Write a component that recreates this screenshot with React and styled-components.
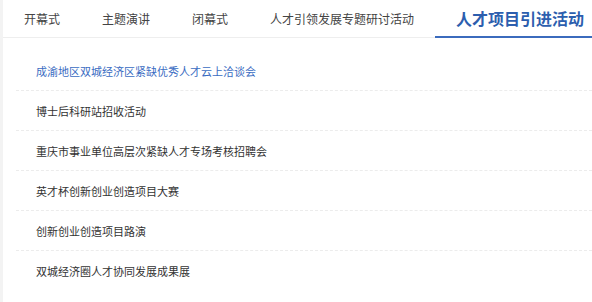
import React from 'react';
import styled, { createGlobalStyle } from 'styled-components';

const GlobalStyle = createGlobalStyle`
  html, body {
    margin: 0;
    padding: 0;
    background: #fff;
  }
  body {
    font-family: "Noto Sans CJK SC", "Noto Sans", sans-serif;
  }
`;

const tabs = ['开幕式', '主题演讲', '闭幕式', '人才引领发展专题研讨活动', '人才项目引进活动'];

const items = [
  '成渝地区双城经济区紧缺优秀人才云上洽谈会',
  '博士后科研站招收活动',
  '重庆市事业单位高层次紧缺人才专场考核招聘会',
  '英才杯创新创业创造项目大赛',
  '创新创业创造项目路演',
  '双城经济圈人才协同发展成果展',
];

const Panel = styled.div`
  width: 592px;
  height: 302px;
  box-sizing: border-box;
  border-left: 3px solid #f3f3f3;
  overflow: hidden;
`;

const TabBar = styled.div`
  display: flex;
  height: 37px;
  border-bottom: 1px solid #eeeeee;
  white-space: nowrap;
`;

const Tab = styled.div`
  flex-shrink: 0;
  display: flex;
  align-items: center;
  padding: 0 21px;
  height: ${p => (p.$active ? '36px' : '37px')};
  font-size: ${p => (p.$active ? '16px' : '12px')};
  font-weight: ${p => (p.$active ? 700 : 400)};
  color: ${p => (p.$active ? '#2c5eae' : '#444')};
  border-bottom: ${p => (p.$active ? '2px solid #3b6bbd' : 'none')};
  margin-bottom: ${p => (p.$active ? '-1px' : '0')};
  cursor: pointer;
`;

const List = styled.ul`
  list-style: none;
  margin: 0;
  padding: 13px 0 0 13px;
`;

const Item = styled.li`
  height: 39px;
  display: flex;
  align-items: center;
  padding-left: 20px;
  font-size: 11px;
  color: ${p => (p.$highlight ? '#3a6cc2' : '#333')};
  border-bottom: 1px dashed #ececec;

  &:last-child {
    border-bottom: none;
  }
`;

export default function App() {
  return (
    <>
      <GlobalStyle />
      <Panel>
        <TabBar>
          {tabs.map((t, i) => (
            <Tab key={t} $active={i === tabs.length - 1}>{t}</Tab>
          ))}
        </TabBar>
        <List>
          {items.map((t, i) => (
            <Item key={t} $highlight={i === 0}>{t}</Item>
          ))}
        </List>
      </Panel>
    </>
  );
}
